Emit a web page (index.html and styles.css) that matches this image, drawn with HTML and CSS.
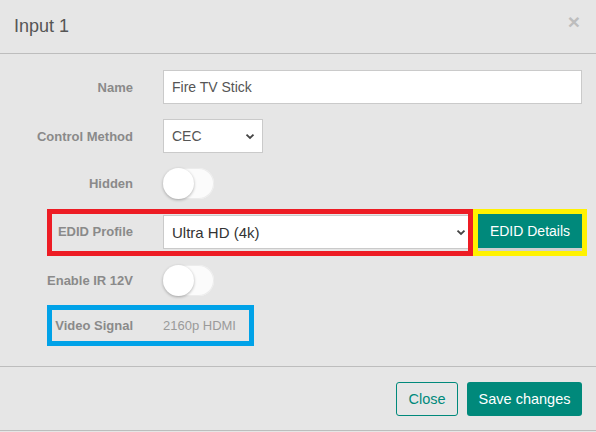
FILE: index.html
```html
<!DOCTYPE html>
<html>
<head>
<meta charset="utf-8">
<link rel="stylesheet" href="styles.css">
</head>
<body>
<div class="modal">
  <div class="modal-header">
    <h4 class="title">Input 1</h4>
    <span class="close-x">×</span>
  </div>
  <div class="modal-body">
    <div class="row r-name">
      <label class="lbl">Name</label>
      <div class="input wide">Fire TV Stick</div>
    </div>
    <div class="row r-control">
      <label class="lbl">Control Method</label>
      <div class="input select short">
        <span>CEC</span>
        <svg class="chev" width="10" height="7" viewBox="0 0 10 7"><path d="M1.5 1.6 L5 5 L8.5 1.6" fill="none" stroke="#444" stroke-width="1.8"/></svg>
      </div>
    </div>
    <div class="row r-hidden">
      <label class="lbl">Hidden</label>
      <div class="toggle"><div class="knob"></div></div>
    </div>
    <div class="row r-edid">
      <div class="red-box">
        <label class="lbl lbl-in">EDID Profile</label>
        <div class="input select edid">
          <span class="dark">Ultra HD (4k)</span>
          <svg class="chev" width="10" height="7" viewBox="0 0 10 7"><path d="M1.5 1.6 L5 5 L8.5 1.6" fill="none" stroke="#444" stroke-width="1.8"/></svg>
        </div>
      </div>
      <div class="yellow-box">
        <button class="btn-teal">EDID Details</button>
      </div>
    </div>
    <div class="row r-ir">
      <label class="lbl">Enable IR 12V</label>
      <div class="toggle"><div class="knob"></div></div>
    </div>
    <div class="row r-video">
      <div class="blue-box">
        <label class="lbl lbl-in">Video Signal</label>
        <span class="value">2160p HDMI</span>
      </div>
    </div>
  </div>
  <div class="modal-footer">
    <button class="btn-outline">Close</button>
    <button class="btn-teal btn-save">Save changes</button>
  </div>
</div>
</body>
</html>
```

FILE: styles.css
```css
* { box-sizing: border-box; }
html, body {
  margin: 0;
  padding: 0;
  background: #e6e6e6;
  font-family: "Liberation Sans", Arial, sans-serif;
}
.modal {
  width: 596px;
  height: 431px;
  border-bottom: 1px solid #bdbdbd;
}
.modal-header {
  height: 54px;
  border-bottom: 1px solid #bdbdbd;
  display: flex;
  align-items: center;
  justify-content: space-between;
  padding: 0 14px 0 14px;
}
.title {
  margin: 0;
  font-size: 18px;
  font-weight: normal;
  color: #555;
}
.close-x {
  font-size: 21px;
  font-weight: bold;
  color: #bdbdbd;
  margin-top: -10px;
  margin-right: 2px;
}
.modal-body {
  padding: 16px 0 20px 0;
}
.row {
  display: flex;
  align-items: center;
}
.r-name { margin-bottom: 15px; }
.r-control { margin-bottom: 15px; }
.r-hidden { margin-bottom: 10px; }
.r-edid { margin-bottom: 9px; margin-left: 47px; align-items: stretch; }
.r-ir { margin-bottom: 9px; }
.r-video { margin-left: 47px; }
.lbl {
  width: 133px;
  text-align: right;
  font-size: 13px;
  font-weight: bold;
  color: #8a8a8a;
  flex: none;
}
.lbl-in { width: 81px; }
.input {
  margin-left: 30px;
  height: 34px;
  background: #fff;
  border: 1px solid #cacaca;
  font-size: 14px;
  color: #555;
  display: flex;
  align-items: center;
  padding: 0 8px;
}
.wide { width: 419px; }
.short { width: 100px; }
.select { justify-content: space-between; padding-right: 7px; }
.edid { width: 306px; padding-right: 2px; border-right: none; }
.dark { color: #333; font-size: 15px; }
.chev { display: block; }
.toggle {
  margin-left: 30px;
  width: 51px;
  height: 31px;
  border-radius: 16px;
  background: #fbfbfb;
  box-shadow: inset 0 0 0 1px #ececec;
  position: relative;
}
.knob {
  position: absolute;
  left: 0;
  top: 0;
  width: 31px;
  height: 31px;
  border-radius: 50%;
  background: #fff;
  box-shadow: 0 1px 3px rgba(0,0,0,0.3);
}
.red-box {
  display: flex;
  align-items: flex-start;
  border: 5px solid #ed1c24;
  width: 426px;
  height: 47px;
  padding-top: 1px;
}
.red-box .lbl-in { line-height: 34px; }
.yellow-box {
  border: 5px solid #fff200;
  width: 114px;
  height: 47px;
  background: #cfcfcf;
}
.btn-teal {
  display: block;
  border: none;
  background: #00897b;
  color: #fff;
  font-family: "Liberation Sans", Arial, sans-serif;
  font-size: 14px;
  height: 34px;
  width: 104px;
  padding: 0;
}
.blue-box {
  display: flex;
  align-items: center;
  border: 5px solid #00a2e8;
  width: 207px;
  height: 41px;
}
.value {
  margin-left: 30px;
  font-size: 13px;
  color: #9a9a9a;
}
.modal-footer {
  border-top: 1px solid #bdbdbd;
  display: flex;
  justify-content: flex-end;
  padding: 15px 14px 0 0;
}
.btn-outline {
  height: 34px;
  width: 62px;
  background: transparent;
  border: 1px solid #00897b;
  border-radius: 3px;
  color: #00897b;
  font-family: "Liberation Sans", Arial, sans-serif;
  font-size: 14.5px;
  padding: 0;
  margin-right: 9px;
}
.btn-save {
  width: 115px;
  border-radius: 3px;
  font-size: 14.5px;
}
```
